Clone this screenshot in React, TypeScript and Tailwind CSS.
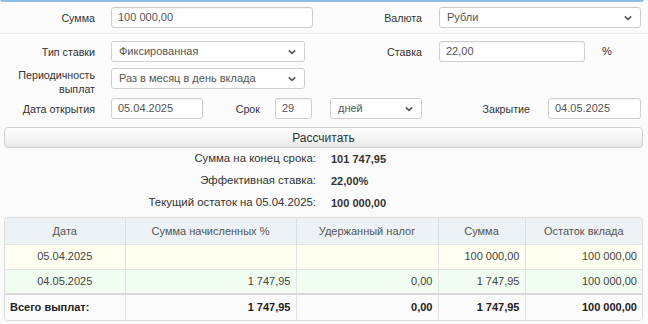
import React from "react";

const font = { fontFamily: '"Liberation Sans", Arial, sans-serif' };

function Chevron() {
  return (
    <svg width="10" height="7" viewBox="0 0 10 7" className="absolute right-[7px] top-1/2 -translate-y-1/2">
      <path d="M1.8 1.8 L5 4.8 L8.2 1.8" fill="none" stroke="#555" strokeWidth="1.6" />
    </svg>
  );
}

function Input({ value, className }: { value: string; className: string }) {
  return (
    <div className={`flex h-[21px] items-center rounded-[3px] border border-[#cfcfcf] bg-white px-[6px] text-[#555] shadow-[inset_0_1px_1px_rgba(0,0,0,0.05)] ${className}`}>
      {value}
    </div>
  );
}

function Select({ value, className }: { value: string; className: string }) {
  return (
    <div className={`relative flex h-[21px] items-center rounded-[3px] border border-[#cfcfcf] bg-white px-[7px] text-[#555] ${className}`}>
      {value}
      <Chevron />
    </div>
  );
}

function Label({ children, className }: { children: React.ReactNode; className: string }) {
  return <div className={`text-right text-[10.7px] leading-[14px] text-[#333] ${className}`}>{children}</div>;
}

const rows = [
  { date: "05.04.2025", pct: "", tax: "", sum: "100 000,00", rest: "100 000,00", bg: "bg-[#fffff2]" },
  { date: "04.05.2025", pct: "1 747,95", tax: "0,00", sum: "1 747,95", rest: "100 000,00", bg: "bg-[#f1fdf1]" },
];

export default function App() {
  return (
    <div style={font} className="h-[324px] w-[648px] overflow-hidden bg-[#fbfbfb] text-[11px] text-[#333]">
      <div className="mx-0 h-[3px] w-[644px] rounded-b-[5px] border-x border-b-2 border-[#8dbde3] -mt-[1px]" />

      <div className="mt-[5px] flex items-center">
        <Label className="w-[95px]">Сумма</Label>
        <Input value="100 000,00" className="ml-[16px] w-[202px]" />
        <Label className="w-[109px]">Валюта</Label>
        <Select value="Рубли" className="ml-[17px] w-[202px]" />
      </div>

      <div className="mt-[5px] h-px bg-[#ebebeb]" />

      <div className="mt-[7px] flex items-center">
        <Label className="w-[95px]">Тип ставки</Label>
        <Select value="Фиксированная" className="ml-[16px] w-[194px]" />
        <Label className="w-[117px]">Ставка</Label>
        <Input value="22,00" className="ml-[17px] w-[146px]" />
        <span className="ml-[17px] text-[#333]">%</span>
      </div>

      <div className="mt-[6px] flex items-start">
        <Label className="w-[95px]">
          Периодичность
          <br />
          выплат
        </Label>
        <Select value="Раз в месяц в день вклада" className="ml-[16px] w-[194px]" />
      </div>

      <div className="mt-[2px] flex items-center">
        <Label className="w-[95px]">Дата открытия</Label>
        <Input value="05.04.2025" className="ml-[16px] w-[92px]" />
        <Label className="w-[57px]">Срок</Label>
        <Input value="29" className="ml-[15px] w-[37px]" />
        <Select value="дней" className="ml-[18px] w-[92px]" />
        <Label className="w-[108px]">Закрытие</Label>
        <Input value="04.05.2025" className="ml-[18px] w-[93px]" />
      </div>

      <button className="mx-[4px] mt-[8px] flex h-[21px] w-[639px] items-center justify-center rounded-[4px] border border-[#d0d0d0] bg-gradient-to-b from-white to-[#e9e9e9] text-[12px] text-[#333]">
        Рассчитать
      </button>

      <div>
        {[
          ["Сумма на конец срока:", "101 747,95"],
          ["Эффективная ставка:", "22,00%"],
          ["Текущий остаток на 05.04.2025:", "100 000,00"],
        ].map(([l, v]) => (
          <div key={l} className="flex h-[22px] items-center">
            <div className="w-[316px] text-right text-[11.4px]">{l}</div>
            <div className="ml-[15px] font-bold">{v}</div>
          </div>
        ))}
      </div>

      <div className="mx-[4px] mt-[3px] w-[639px] overflow-hidden rounded-[4px] border border-[#dcdcdc]">
        <table className="w-full table-fixed border-collapse">
          <colgroup>
            <col className="w-[120px]" />
            <col className="w-[171px]" />
            <col className="w-[142px]" />
            <col className="w-[87px]" />
            <col />
          </colgroup>
          <thead>
            <tr className="h-[26px] bg-[#edf2f7] text-[#555]">
              {["Дата", "Сумма начисленных %", "Удержанный налог", "Сумма", "Остаток вклада"].map((h, i) => (
                <th key={h} className={`text-center font-normal ${i > 0 ? "border-l border-[#dcdcdc]" : ""}`}>
                  {h}
                </th>
              ))}
            </tr>
          </thead>
          <tbody>
            {rows.map((r) => (
              <tr key={r.date} className={`h-[25px] border-t border-[#e3e3e3] text-[#444] ${r.bg}`}>
                <td className="text-center">{r.date}</td>
                <td className="border-l border-[#e3e3e3] pr-[5px] text-right">{r.pct}</td>
                <td className="border-l border-[#e3e3e3] pr-[5px] text-right">{r.tax}</td>
                <td className="border-l border-[#e3e3e3] pr-[5px] text-right">{r.sum}</td>
                <td className="border-l border-[#e3e3e3] pr-[5px] text-right">{r.rest}</td>
              </tr>
            ))}
          </tbody>
          <tfoot>
            <tr className="h-[26px] border-t-2 border-[#d8d8d8] bg-[#fbfbfb] font-bold text-[#222]">
              <td className="pl-[5px] text-left">Всего выплат:</td>
              <td className="border-l border-[#e3e3e3] pr-[5px] text-right">1 747,95</td>
              <td className="border-l border-[#e3e3e3] pr-[5px] text-right">0,00</td>
              <td className="border-l border-[#e3e3e3] pr-[5px] text-right">1 747,95</td>
              <td className="border-l border-[#e3e3e3] pr-[5px] text-right">100 000,00</td>
            </tr>
          </tfoot>
        </table>
      </div>
    </div>
  );
}
